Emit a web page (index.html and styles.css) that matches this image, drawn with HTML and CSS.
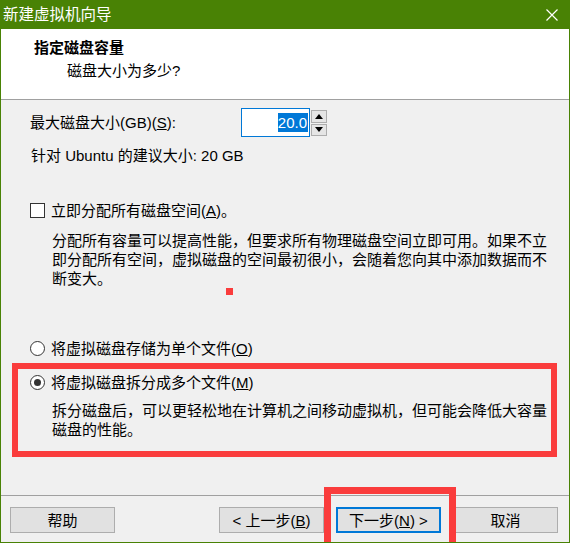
FILE: index.html
```html
<!DOCTYPE html>
<html lang="zh-CN">
<head>
    <meta charset="UTF-8">
    <meta name="viewport" content="width=device-width, initial-scale=1.0">
    <title>新建虚拟机向导</title>
    <link rel="stylesheet" href="styles.css">
</head>
<body>
    <div class="window">
        <div class="titlebar">
            <span class="title">新建虚拟机向导</span>
            <svg class="close" width="12" height="12" viewBox="0 0 12 12">
                <path d="M0.5 0.5 L11.5 11.5 M11.5 0.5 L0.5 11.5" stroke="#fff" stroke-width="1.2" fill="none"/>
            </svg>
        </div>

        <div class="header">
            <h1>指定磁盘容量</h1>
            <p>磁盘大小为多少?</p>
        </div>

        <div class="content">
            <div class="size-row">
                <label class="size-label">最大磁盘大小(GB)(<u>S</u>):</label>
                <div class="spin">
                    <div class="spin-input"><span class="selected">20.0</span></div>
                    <div class="spin-buttons">
                        <span class="spin-btn">
                            <svg width="8" height="5" viewBox="0 0 8 5"><polygon points="4,0 8,5 0,5" fill="#000"/></svg>
                        </span>
                        <span class="spin-btn">
                            <svg width="8" height="5" viewBox="0 0 8 5"><polygon points="0,0 8,0 4,5" fill="#000"/></svg>
                        </span>
                    </div>
                </div>
            </div>

            <p class="hint">针对 Ubuntu 的建议大小: 20 GB</p>

            <div class="option check-option">
                <span class="checkbox"></span>
                <span>立即分配所有磁盘空间(<u>A</u>)。</span>
            </div>
            <p class="desc">分配所有容量可以提高性能，但要求所有物理磁盘空间立即可用。如果不立<br>即分配所有空间，虚拟磁盘的空间最初很小，会随着您向其中添加数据而不<br>断变大。</p>

            <div class="option radio-single">
                <span class="radio"></span>
                <span>将虚拟磁盘存储为单个文件(<u>O</u>)</span>
            </div>

            <div class="option radio-split">
                <span class="radio checked"></span>
                <span>将虚拟磁盘拆分成多个文件(<u>M</u>)</span>
            </div>
            <p class="desc desc-split">拆分磁盘后，可以更轻松地在计算机之间移动虚拟机，但可能会降低大容量<br>磁盘的性能。</p>
        </div>

        <div class="footer">
            <button class="btn">帮助</button>
            <div class="nav-buttons">
                <button class="btn">&lt; 上一步(<u>B</u>)</button>
                <button class="btn btn-default">下一步(<u>N</u>) &gt;</button>
                <button class="btn">取消</button>
            </div>
        </div>

        <!-- red annotation marks drawn over the dialog -->
        <div class="mark-dot"></div>
        <div class="mark-box mark-split"></div>
        <div class="mark-box mark-next"></div>
    </div>
</body>
</html>
```

FILE: styles.css
```css
html, body {
    margin: 0;
    padding: 0;
}
body {
    font-family: "Liberation Sans", "Noto Sans CJK SC", sans-serif;
    font-size: 15px;
    line-height: 19px;
    color: #000;
    background-color: #f0f0f0;
}
.window {
    position: relative;
    width: 570px;
    height: 543px;
    box-sizing: border-box;
    border: 1px solid #498205;
    border-top: none;
    display: flex;
    flex-direction: column;
    overflow: hidden;
    background-color: #f0f0f0;
}
.titlebar {
    height: 29px;
    margin: 0 -1px;
    padding: 0 12px 0 3px;
    background-color: #498205;
    display: flex;
    align-items: center;
    justify-content: space-between;
    flex-shrink: 0;
}
.title {
    color: #fff;
    font-size: 15.5px;
    line-height: 29px;
}
.close {
    display: block;
    margin-top: 1px;
}
.header {
    height: 71px;
    box-sizing: border-box;
    padding: 9px 0 0 33px;
    background-color: #fff;
    border-bottom: 1px solid #a0a0a0;
    flex-shrink: 0;
}
.header h1 {
    margin: 0;
    font-size: 15px;
    font-weight: bold;
    line-height: 19px;
}
.header p {
    margin: 4px 0 0 33px;
}
.content {
    flex: 1;
    padding: 8px 0 0 28px;
}
.size-row {
    display: flex;
    align-items: center;
    height: 29px;
}
.size-label {
    width: 211px;
    padding-left: 1px;
}
.spin {
    display: flex;
    height: 29px;
}
.spin-input {
    width: 69px;
    box-sizing: border-box;
    border: 1px solid #0078d7;
    background-color: #fff;
    display: flex;
    align-items: center;
    justify-content: flex-end;
    padding-right: 1px;
}
.selected {
    background-color: #0078d7;
    color: #fff;
    line-height: 19px;
    padding: 0 1px 0 0;
}
.spin-buttons {
    display: flex;
    flex-direction: column;
    gap: 1px;
    padding: 2px 0 1px 1px;
}
.spin-btn {
    width: 16px;
    flex: 1;
    box-sizing: border-box;
    border: 1px solid #adadad;
    background-color: #e5e5e5;
    display: flex;
    align-items: center;
    justify-content: center;
}
.spin-btn svg {
    display: block;
}
.hint {
    margin: 9px 0 0 2px;
}
.option {
    display: flex;
    align-items: center;
    gap: 6px;
    padding-left: 1px;
}
.check-option {
    margin-top: 36px;
}
.checkbox {
    width: 15px;
    height: 15px;
    box-sizing: border-box;
    border: 1px solid #333;
    background-color: #fff;
}
.radio {
    width: 15px;
    height: 15px;
    box-sizing: border-box;
    border: 1px solid #333;
    border-radius: 50%;
    background-color: #fff;
    display: flex;
    align-items: center;
    justify-content: center;
}
.radio.checked::after {
    content: "";
    width: 7px;
    height: 7px;
    border-radius: 50%;
    background-color: #333;
}
.desc {
    margin: 11px 0 0 23px;
    white-space: nowrap;
}
.radio-single {
    margin-top: 51px;
}
.radio-split {
    margin-top: 15px;
}
.desc-split {
    margin-top: 9px;
}
.footer {
    height: 47px;
    box-sizing: border-box;
    border-top: 1px solid #a0a0a0;
    padding: 11px 11px 0 9px;
    display: flex;
    align-items: flex-start;
    flex-shrink: 0;
}
.nav-buttons {
    margin-left: auto;
    display: flex;
    gap: 12px;
}
.btn {
    width: 105px;
    height: 26px;
    box-sizing: border-box;
    border: 1px solid #adadad;
    background-color: #e1e1e1;
    font-family: inherit;
    font-size: 15px;
    line-height: 19px;
    color: #000;
    padding: 0;
}
.btn-default {
    border: 2px solid #0078d7;
}
.mark-dot {
    position: absolute;
    left: 225px;
    top: 288px;
    width: 7px;
    height: 7px;
    background-color: #fa3c3c;
}
.mark-box {
    position: absolute;
    border: 6px solid #fa3c3c;
    box-sizing: border-box;
}
.mark-split {
    left: 11px;
    top: 363px;
    width: 545px;
    height: 94px;
}
.mark-next {
    left: 323px;
    top: 487px;
    width: 132px;
    height: 70px;
    border-width: 7px;
}
```
